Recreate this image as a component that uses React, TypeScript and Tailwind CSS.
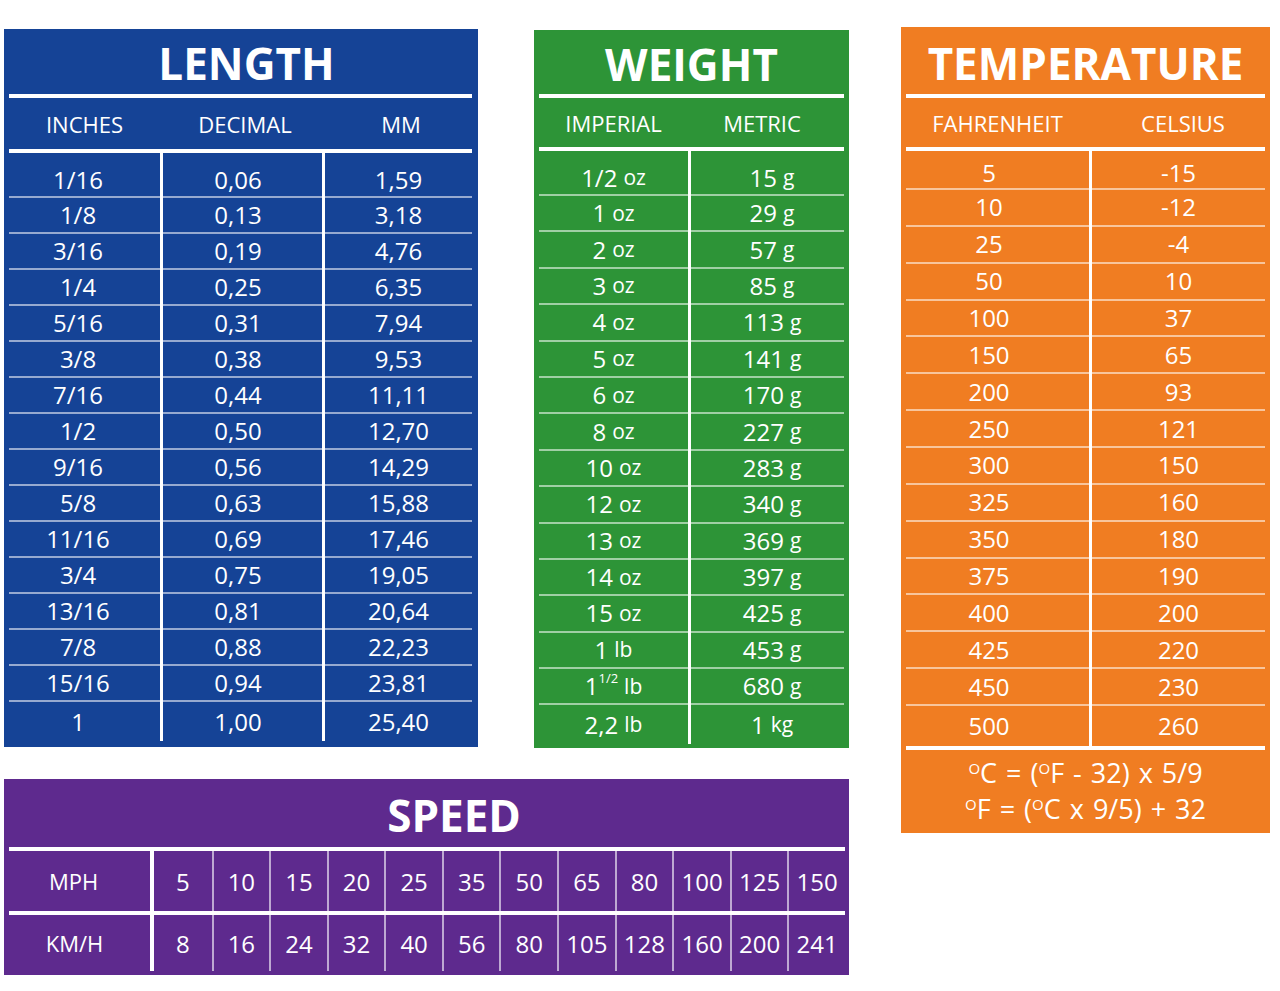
import type {ReactNode} from "react"

const lengthRows: ReactNode[][] = [
  ["1/16", "0,06", "1,59"],
  ["1/8", "0,13", "3,18"],
  ["3/16", "0,19", "4,76"],
  ["1/4", "0,25", "6,35"],
  ["5/16", "0,31", "7,94"],
  ["3/8", "0,38", "9,53"],
  ["7/16", "0,44", "11,11"],
  ["1/2", "0,50", "12,70"],
  ["9/16", "0,56", "14,29"],
  ["5/8", "0,63", "15,88"],
  ["11/16", "0,69", "17,46"],
  ["3/4", "0,75", "19,05"],
  ["13/16", "0,81", "20,64"],
  ["7/8", "0,88", "22,23"],
  ["15/16", "0,94", "23,81"],
  ["1", "1,00", "25,40"],
]

function u(num: ReactNode, unit: string) {
  return (
    <>
      {num}
      <span className="ml-[6px] text-[21px]">{unit}</span>
    </>
  )
}

const weightRows: ReactNode[][] = [
  [u("1/2", "oz"), u("15", "g")],
  [u("1", "oz"), u("29", "g")],
  [u("2", "oz"), u("57", "g")],
  [u("3", "oz"), u("85", "g")],
  [u("4", "oz"), u("113", "g")],
  [u("5", "oz"), u("141", "g")],
  [u("6", "oz"), u("170", "g")],
  [u("8", "oz"), u("227", "g")],
  [u("10", "oz"), u("283", "g")],
  [u("12", "oz"), u("340", "g")],
  [u("13", "oz"), u("369", "g")],
  [u("14", "oz"), u("397", "g")],
  [u("15", "oz"), u("425", "g")],
  [u("1", "lb"), u("453", "g")],
  [
    u(
      <>
        1<sup className="top-[-0.6em] text-[13px]">1/2</sup>
      </>,
      "lb",
    ),
    u("680", "g"),
  ],
  [u("2,2", "lb"), u("1", "kg")],
]

const tempRows: ReactNode[][] = [
  ["5", "-15"],
  ["10", "-12"],
  ["25", "-4"],
  ["50", "10"],
  ["100", "37"],
  ["150", "65"],
  ["200", "93"],
  ["250", "121"],
  ["300", "150"],
  ["325", "160"],
  ["350", "180"],
  ["375", "190"],
  ["400", "200"],
  ["425", "220"],
  ["450", "230"],
  ["500", "260"],
]

const mph = ["5", "10", "15", "20", "25", "35", "50", "65", "80", "100", "125", "150"]
const kmh = ["8", "16", "24", "32", "40", "56", "80", "105", "128", "160", "200", "241"]

interface BodyProps {
  cols: string
  pads: string[]
  rows: ReactNode[][]
  first: string
  mid: string
  last: string
  bg: string
}

function Body({cols, pads, rows, first, mid, last, bg}: BodyProps) {
  return (
    <div className={`grid gap-x-[3px] bg-white ${cols}`}>
      {rows.map((row, i) => {
        const isLast = i === rows.length - 1
        const h = i === 0 ? first : isLast ? last : mid
        const line = isLast ? "" : "border-b-2 border-white/55"
        return row.map((cell, j) => (
          <div
            key={`${i}-${j}`}
            className={`flex items-center justify-center whitespace-nowrap text-[24px] leading-none ${bg} ${h} ${line} ${pads[j]}`}
          >
            {cell}
          </div>
        ))
      })}
    </div>
  )
}

function Line() {
  return <div className="h-[4px] shrink-0 bg-white" />
}

function Deg() {
  return <sup className="top-[-0.55em] text-[15px]">O</sup>
}

export default function App() {
  return (
    <div className="min-h-screen bg-white font-['Open_Sans','Noto_Sans',sans-serif] text-white">
      <div className="flex items-start gap-[52px] pt-[27px] pl-[4px]">
        <div className="flex flex-col gap-[31px] pt-[2px]">
          <div className="flex items-start gap-[56px]">
            {/* LENGTH */}
            <div className="flex w-[474px] flex-col bg-[#154396] pr-[6px] pb-[6px] pl-[5px]">
              <div className="flex h-[65px] items-center justify-center pt-[3px] pl-[12px] text-[44px] leading-none font-bold">
                LENGTH
              </div>
              <Line />
              <div className="grid h-[51px] grid-cols-[151px_159px_147px] items-center gap-x-[3px] pt-[1px] text-center text-[22px] leading-none">
                <div>INCHES</div>
                <div className="pl-[5px]">DECIMAL</div>
                <div className="pl-[5px]">MM</div>
              </div>
              <Line />
              <Body
                cols="grid-cols-[151px_159px_147px]"
                pads={["pr-[13px]", "pr-[9px]", ""]}
                rows={lengthRows}
                first="h-[45px] pt-[10px]"
                mid="h-[36px]"
                last="h-[39px]"
                bg="bg-[#154396]"
              />
            </div>

            {/* WEIGHT */}
            <div className="mt-[1px] flex w-[315px] flex-col bg-[#2d9437] px-[5px] pb-[4px]">
              <div className="flex h-[64px] items-center justify-center pt-[3px] text-[44px] leading-none font-bold">
                WEIGHT
              </div>
              <Line />
              <div className="grid h-[49px] grid-cols-[149px_153px] items-center gap-x-[3px] text-center text-[22px] leading-none">
                <div>IMPERIAL</div>
                <div className="pr-[11px]">METRIC</div>
              </div>
              <Line />
              <Body
                cols="grid-cols-[149px_153px]"
                pads={["", "pl-[9px]"]}
                rows={weightRows}
                first="h-[45px] pt-[10px]"
                mid="h-[36.4px]"
                last="h-[39px]"
                bg="bg-[#2d9437]"
              />
            </div>
          </div>

          {/* SPEED */}
          <div className="flex w-[845px] flex-col bg-[#5e2a8e] pr-[4px] pb-[4px] pl-[5px]">
            <div className="flex h-[68px] items-center justify-center pt-[3px] pl-[54px] text-[44px] leading-none font-bold">
              SPEED
            </div>
            <Line />
            <div className="grid grid-cols-[141px_1fr] gap-[4px] bg-white text-[24px] leading-none">
              <div className="flex h-[60px] items-center justify-center bg-[#5e2a8e] pr-[12px] text-[22px]">MPH</div>
              <div className="grid h-[60px] grid-cols-12 bg-[#5e2a8e]">
                {mph.map((v, i) => (
                  <div
                    key={v}
                    className={`flex items-center justify-center pt-[2px] ${i > 0 ? "border-l-2 border-white/60" : ""}`}
                  >
                    {v}
                  </div>
                ))}
              </div>
              <div className="flex h-[56px] items-center justify-center bg-[#5e2a8e] pr-[10px] text-[22px]">KM/H</div>
              <div className="grid h-[56px] grid-cols-12 bg-[#5e2a8e]">
                {kmh.map((v, i) => (
                  <div
                    key={v}
                    className={`flex items-center justify-center pt-[2px] ${i > 0 ? "border-l-2 border-white/60" : ""}`}
                  >
                    {v}
                  </div>
                ))}
              </div>
            </div>
          </div>
        </div>

        {/* TEMPERATURE */}
        <div className="flex w-[369px] flex-col bg-[#f07d22] px-[5px] pb-[4px]">
          <div className="flex h-[67px] items-center justify-center pt-[5px] text-[44px] leading-none font-bold">
            TEMPERATURE
          </div>
          <Line />
          <div className="grid h-[49px] grid-cols-[183px_173px] items-center gap-x-[3px] text-center text-[22px] leading-none">
            <div>FAHRENHEIT</div>
            <div className="pl-[9px]">CELSIUS</div>
          </div>
          <Line />
          <Body
            cols="grid-cols-[183px_173px]"
            pads={["pr-[17px]", ""]}
            rows={tempRows}
            first="h-[39px] pt-[7px]"
            mid="h-[36.86px]"
            last="h-[40px]"
            bg="bg-[#f07d22]"
          />
          <Line />
          <div className="flex h-[79px] flex-col items-center justify-center pt-[2px] text-[27px] leading-[36px] [word-spacing:2px]">
            <div>
              <Deg />C = (<Deg />F - 32) x 5/9
            </div>
            <div>
              <Deg />F = (<Deg />C x 9/5) + 32
            </div>
          </div>
        </div>
      </div>
    </div>
  )
}
